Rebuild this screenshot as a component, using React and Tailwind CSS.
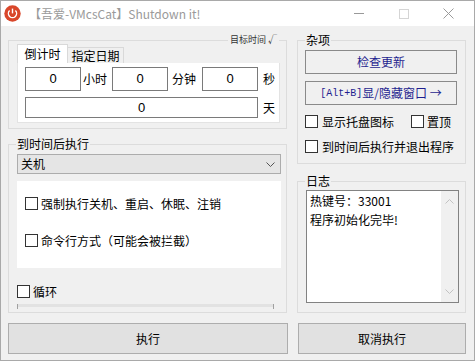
import React from 'react'

const cjk = "font-['Noto_Sans_CJK_SC','Microsoft_YaHei',sans-serif]"

function Check({ label, className = '' }) {
  return (
    <div className={`flex items-center gap-[3px] h-[13px] ${className}`}>
      <span className="w-[13px] h-[13px] border border-[#333333] bg-white shrink-0" />
      <span className="leading-[13px] whitespace-nowrap">{label}</span>
    </div>
  )
}

function Group({ label, className = '', children }) {
  return (
    <div className={`relative border border-[#dcdcdc] ${className}`}>
      {label && (
        <span className="absolute left-[7px] top-[-9px] px-[1px] bg-[#f0f0f0] leading-[16px] whitespace-nowrap">
          {label}
        </span>
      )}
      {children}
    </div>
  )
}

function NumBox({ className = '' }) {
  return (
    <div className={`border border-[#7a7a7a] bg-white flex items-center justify-center font-['Liberation_Sans',sans-serif] text-[13px] ${className}`}>
      0
    </div>
  )
}

function Chevron({ up = false, color = '#555555' }) {
  return (
    <svg width="9" height="5" viewBox="0 0 9 5">
      <path d={up ? 'M0.5 4.5 L4.5 0.5 L8.5 4.5' : 'M0.5 0.5 L4.5 4.5 L8.5 0.5'} fill="none" stroke={color} strokeWidth="1" />
    </svg>
  )
}

export default function App() {
  return (
    <div className={`w-[475px] h-[361px] bg-[#f0f0f0] border border-[#a9a9a9] flex flex-col overflow-hidden text-[12px] text-black ${cjk}`}>
      {/* title bar */}
      <div className="h-[25px] bg-white flex items-center pl-[3px] shrink-0">
        <svg width="17" height="17" viewBox="0 0 17 17" className="shrink-0">
          <circle cx="8.5" cy="8.5" r="8.2" fill="#d9472b" />
          <path d="M5.6 5.6 A4.1 4.1 0 1 0 11.4 5.6" fill="none" stroke="#ffffff" strokeWidth="1.4" />
          <path d="M8.5 3.6 V8.4" stroke="#ffffff" strokeWidth="1.4" />
        </svg>
        <span className="ml-[8px] text-[12px] text-[#9a9a9a] whitespace-nowrap">【吾爱-VMcsCat】Shutdown it!</span>
        <div className="ml-auto flex h-full pr-[3px]">
          <div className="w-[45px] flex items-center justify-center">
            <span className="w-[10px] h-px bg-[#999999]" />
          </div>
          <div className="w-[45px] flex items-center justify-center">
            <span className="w-[10px] h-[10px] border border-[#d5d5d5]" />
          </div>
          <div className="w-[45px] flex items-center justify-center">
            <svg width="11" height="11" viewBox="0 0 11 11">
              <path d="M0.5 0.5 L10.5 10.5 M10.5 0.5 L0.5 10.5" stroke="#9a9a9a" strokeWidth="1" />
            </svg>
          </div>
        </div>
      </div>

      {/* body */}
      <div className="flex gap-[10px] px-[7px] pt-[14px]">
        {/* left column */}
        <div className="w-[279px] flex flex-col">
          <Group className="h-[89px] pt-[3px] pl-[8px]">
            <span className="absolute right-[7px] top-[-7px] px-[2px] bg-[#f0f0f0] text-[9px] leading-[12px] text-[#333333] whitespace-nowrap">
              目标时间 √
            </span>
            <div className="flex items-end h-[19px]">
              <div className="w-[51px] h-[19px] bg-white border border-b-0 border-[#d9d9d9] flex items-center justify-center text-[12px]">
                倒计时
              </div>
              <div className="w-[56px] h-[16px] border border-b-0 border-l-0 border-[#d9d9d9] flex items-center justify-center text-[12px]">
                指定日期
              </div>
            </div>
            <div className="w-[263px] h-[60px] bg-white border border-t-0 border-[#e3e3e3] pt-[4px] pl-[7px]">
              <div className="flex items-center h-[24px]">
                <NumBox className="w-[56px] h-[24px]" />
                <span className="w-[31px] pl-[2px]">小时</span>
                <NumBox className="w-[56px] h-[24px]" />
                <span className="w-[34px] pl-[4px]">分钟</span>
                <NumBox className="w-[56px] h-[24px]" />
                <span className="pl-[5px]">秒</span>
              </div>
              <div className="flex items-center h-[21px] mt-[6px]">
                <NumBox className="w-[233px] h-[21px]" />
                <span className="pl-[5px]">天</span>
              </div>
            </div>
          </Group>

          <Group label="到时间后执行" className="mt-[15px] h-[169px] pt-[9px] pl-[8px]">
            <div className="w-[264px] h-[20px] bg-[#e5e5e5] border border-[#acacac] flex items-center justify-between pl-[3px] pr-[5px]">
              <span>关机</span>
              <Chevron />
            </div>
            <div className="mt-[7px] w-[264px] h-[87px] bg-white pl-[8px] pt-[16px]">
              <Check label="强制执行关机、重启、休眠、注销" />
              <Check label="命令行方式（可能会被拦截）" className="mt-[24px]" />
            </div>
            <Check label="循环" className="mt-[17px]" />
            <div className="relative mt-[6px] w-[257px] h-[3px] bg-[#e2e2e2]">
              <span className="absolute left-0 top-0 w-px h-[5px] bg-[#a0a0a0]" />
              <span className="absolute right-0 top-0 w-px h-[5px] bg-[#a0a0a0]" />
            </div>
          </Group>
        </div>

        {/* right column */}
        <div className="w-[169px] flex flex-col">
          <Group label="杂项" className="h-[124px] pt-[9px] pl-[7px]">
            <div className="w-[152px] h-[24px] border border-[#8a8a8a] flex items-center justify-center text-[#1f1f8f]">
              检查更新
            </div>
            <div className="mt-[7px] w-[152px] h-[24px] border border-[#8a8a8a] flex items-center justify-center text-[#1f1f8f] whitespace-nowrap">
              <span className="font-['Liberation_Mono',monospace] text-[10px]">[Alt+B]</span>
              <span>显/隐藏窗口 →</span>
            </div>
            <div className="mt-[10px] flex">
              <Check label="显示托盘图标" className="gap-[4px]" />
              <Check label="置顶" className="ml-[17px]" />
            </div>
            <Check label="到时间后执行并退出程序" className="mt-[12px] gap-[4px]" />
          </Group>

          <Group label="日志" className="mt-[17px] h-[132px] pt-[8px] pl-[8px]">
            <div className="w-[153px] h-[113px] border border-[#828282] bg-white flex">
              <div className="flex-1 pl-[3px] leading-[19px] text-[12px]">
                <div>热键号：33001</div>
                <div>程序初始化完毕!</div>
              </div>
              <div className="w-[17px] bg-[#f0f0f0] flex flex-col items-center justify-between py-[8px]">
                <Chevron up color="#c2c2c2" />
                <Chevron color="#c2c2c2" />
              </div>
            </div>
          </Group>
        </div>
      </div>

      {/* action buttons */}
      <div className="flex gap-[10px] px-[7px] mt-[10px]">
        <button className="w-[280px] h-[31px] bg-[#e1e1e1] border border-[#adadad] text-[12px]">执行</button>
        <button className="w-[168px] h-[31px] bg-[#e1e1e1] border border-[#adadad] text-[12px]">取消执行</button>
      </div>
    </div>
  )
}
